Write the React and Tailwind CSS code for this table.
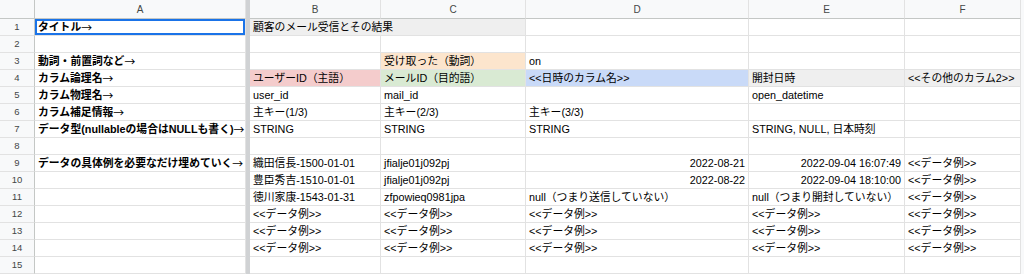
const font = { fontFamily: '"Liberation Sans", "Noto Sans CJK JP", sans-serif' };

const rows = [
  { a: 'タイトル', cells: [{ text: '顧客のメール受信とその結果', span: 2, bg: 'bg-[#efefef]' }, {}, {}, {}] },
  { a: '', cells: [{}, {}, {}, {}, {}] },
  { a: '動詞・前置詞など', cells: [{}, { text: '受け取った（動詞）', bg: 'bg-[#fce5cd]' }, { text: 'on' }, {}, {}] },
  {
    a: 'カラム論理名',
    cells: [
      { text: 'ユーザーID（主語）', bg: 'bg-[#f4cccc]' },
      { text: 'メールID（目的語）', bg: 'bg-[#d9ead3]' },
      { text: '<<日時のカラム名>>', bg: 'bg-[#c9daf8]' },
      { text: '開封日時', bg: 'bg-[#efefef]' },
      { text: '<<その他のカラム2>>', bg: 'bg-[#efefef]' },
    ],
  },
  { a: 'カラム物理名', cells: [{ text: 'user_id' }, { text: 'mail_id' }, {}, { text: 'open_datetime' }, {}] },
  { a: 'カラム補足情報', cells: [{ text: '主キー(1/3)' }, { text: '主キー(2/3)' }, { text: '主キー(3/3)' }, {}, {}] },
  {
    a: 'データ型(nullableの場合はNULLも書く)',
    cells: [{ text: 'STRING' }, { text: 'STRING' }, { text: 'STRING' }, { text: 'STRING, NULL, 日本時刻' }, {}],
  },
  { a: '', cells: [{}, {}, {}, {}, {}] },
  {
    a: 'データの具体例を必要なだけ埋めていく',
    cells: [
      { text: '織田信長-1500-01-01' },
      { text: 'jfialje01j092pj' },
      { text: '2022-08-21', right: true },
      { text: '2022-09-04 16:07:49', right: true },
      { text: '<<データ例>>' },
    ],
  },
  {
    a: '',
    cells: [
      { text: '豊臣秀吉-1510-01-01' },
      { text: 'jfialje01j092pj' },
      { text: '2022-08-22', right: true },
      { text: '2022-09-04 18:10:00', right: true },
      { text: '<<データ例>>' },
    ],
  },
  {
    a: '',
    cells: [
      { text: '徳川家康-1543-01-31' },
      { text: 'zfpowieq0981jpa' },
      { text: 'null（つまり送信していない）' },
      { text: 'null（つまり開封していない）' },
      { text: '<<データ例>>' },
    ],
  },
  { a: '', cells: Array.from({ length: 5 }, () => ({ text: '<<データ例>>' })) },
  { a: '', cells: Array.from({ length: 5 }, () => ({ text: '<<データ例>>' })) },
  { a: '', cells: Array.from({ length: 5 }, () => ({ text: '<<データ例>>' })) },
  { a: '', cells: [{}, {}, {}, {}, {}] },
];

function Cell({ text, bg = 'bg-white', right, span, bold, selected, arrow }) {
  return (
    <div
      className={`flex items-end whitespace-nowrap overflow-hidden border-r border-b border-[#e2e2e2] px-[3px] pb-[1px] leading-[13px] text-[10.8px] text-black ${bg} ${
        right ? 'justify-end' : ''
      } ${span === 2 ? 'col-span-2' : ''} ${bold ? 'font-bold' : ''} ${
        selected ? 'shadow-[inset_0_0_0_2px_#1a73e8]' : ''
      }`}
    >
      {text}
      {arrow && text && <span className="font-['Noto_Sans_CJK_JP'] font-normal">→</span>}
    </div>
  );
}

export default function App() {
  return (
    <div
      style={font}
      className="grid h-[274px] w-[1024px] grid-cols-[35px_211px_4px_131px_145px_223px_156px_116px_3px] grid-rows-[19px_repeat(15,17px)] overflow-hidden bg-white"
    >
      <div className="col-start-3 row-start-1 row-span-16 bg-[#d0d2d4]" />
      <div className="col-start-9 row-start-1 row-span-16 bg-[#f8f9fa]" />

      <div className="border-r border-b border-[#c4c7c5] bg-[#f8f9fa]" />
      {['A', 'B', 'C', 'D', 'E', 'F'].map((c) => (
        <div
          key={c}
          className="flex items-center justify-center border-r border-b border-r-[#e2e2e2] border-b-[#c4c7c5] bg-[#f8f9fa] text-[10px] text-[#444746]"
        >
          {c}
        </div>
      ))}

      {rows.map((row, i) => (
        <div key={i} className="contents">
          <div className="flex items-center justify-center border-r border-b border-r-[#c4c7c5] border-b-[#e2e2e2] bg-[#f8f9fa] text-[9.5px] text-[#444746]">
            {i + 1}
          </div>
          <Cell text={row.a} bold arrow selected={i === 0} />
          {row.cells.map((cell, j) => (
            <Cell key={j} {...cell} />
          ))}
        </div>
      ))}
    </div>
  );
}
